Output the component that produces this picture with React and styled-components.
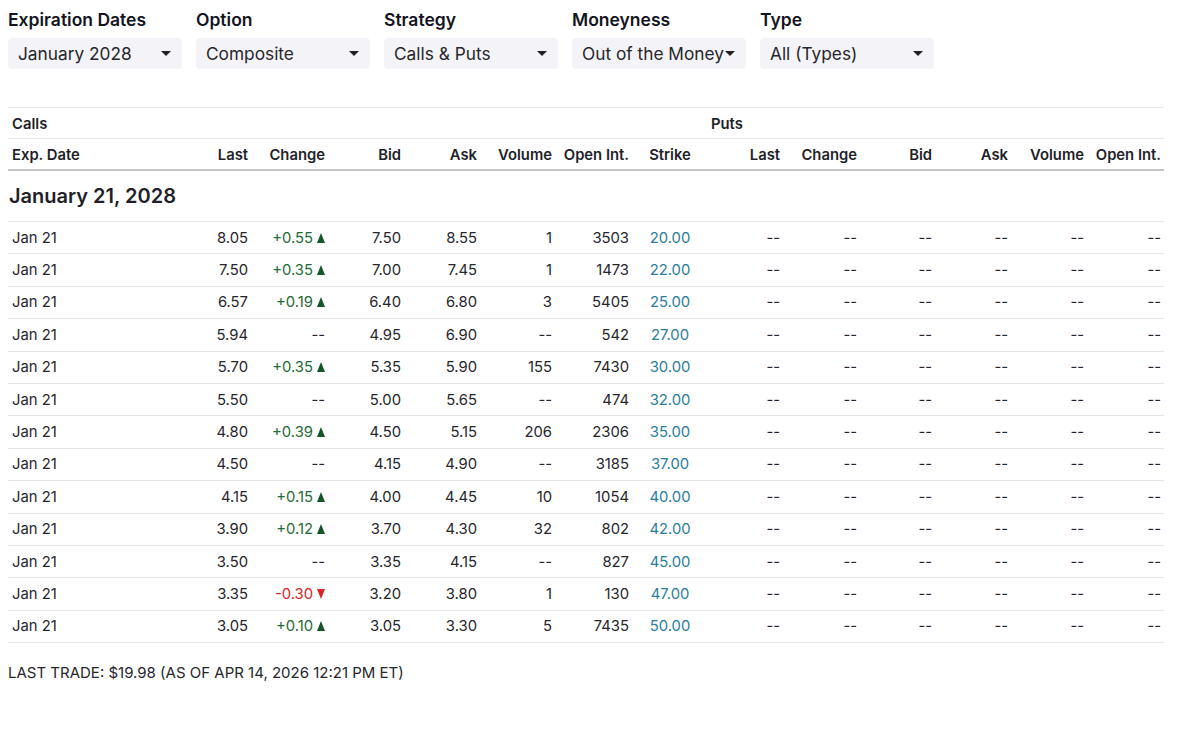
import React from "react"
import styled, { createGlobalStyle } from "styled-components"

const GlobalStyle = createGlobalStyle`
  body {
    margin: 0;
    background: #fff;
    font-family: Inter, "Liberation Sans", sans-serif;
    color: #1f1f24;
  }
`

const filters = [
  { label: "Expiration Dates", value: "January 2028" },
  { label: "Option", value: "Composite" },
  { label: "Strategy", value: "Calls & Puts" },
  { label: "Moneyness", value: "Out of the Money" },
  { label: "Type", value: "All (Types)" },
]

const rows = [
  ["8.05", "+0.55", "7.50", "8.55", "1", "3503", "20.00"],
  ["7.50", "+0.35", "7.00", "7.45", "1", "1473", "22.00"],
  ["6.57", "+0.19", "6.40", "6.80", "3", "5405", "25.00"],
  ["5.94", "--", "4.95", "6.90", "--", "542", "27.00"],
  ["5.70", "+0.35", "5.35", "5.90", "155", "7430", "30.00"],
  ["5.50", "--", "5.00", "5.65", "--", "474", "32.00"],
  ["4.80", "+0.39", "4.50", "5.15", "206", "2306", "35.00"],
  ["4.50", "--", "4.15", "4.90", "--", "3185", "37.00"],
  ["4.15", "+0.15", "4.00", "4.45", "10", "1054", "40.00"],
  ["3.90", "+0.12", "3.70", "4.30", "32", "802", "42.00"],
  ["3.50", "--", "3.35", "4.15", "--", "827", "45.00"],
  ["3.35", "-0.30", "3.20", "3.80", "1", "130", "47.00"],
  ["3.05", "+0.10", "3.05", "3.30", "5", "7435", "50.00"],
]

const sideCols = ["Last", "Change", "Bid", "Ask", "Volume", "Open Int."]

const Caret = () => (
  <svg width="10" height="5" viewBox="0 0 10 5">
    <polygon points="0,0 10,0 5,5" fill="#1f1f24" />
  </svg>
)

const Arrow = ({ up }) => (
  <svg width="8" height="10" viewBox="0 0 8 10" style={{ marginLeft: 4 }}>
    {up ? (
      <polygon points="4,0 8,10 0,10" fill="#14562a" />
    ) : (
      <polygon points="0,0 8,0 4,10" fill="#d7262b" />
    )}
  </svg>
)

const ChangeValue = ({ value }) => {
  if (value === "--") return value
  const up = value.startsWith("+")
  return (
    <ChangeText $up={up}>
      {value}
      <Arrow up={up} />
    </ChangeText>
  )
}

export default function App() {
  return (
    <Page>
      <GlobalStyle />
      <Filters>
        {filters.map((f) => (
          <Filter key={f.label}>
            <FilterLabel>{f.label}</FilterLabel>
            <Select>
              <span>{f.value}</span>
              <Caret />
            </Select>
          </Filter>
        ))}
      </Filters>

      <Table>
        <Row $height={30}>
          <SideTitle $col="1 / 8">Calls</SideTitle>
          <SideTitle $col="9 / 15">Puts</SideTitle>
        </Row>
        <HeadRow>
          <HeadCell $align="left">Exp. Date</HeadCell>
          {sideCols.map((c) => (
            <HeadCell key={"c" + c}>{c}</HeadCell>
          ))}
          <HeadCell $align="center">Strike</HeadCell>
          {sideCols.map((c) => (
            <HeadCell key={"p" + c}>{c}</HeadCell>
          ))}
        </HeadRow>
        <GroupTitle>January 21, 2028</GroupTitle>
        {rows.map((r, i) => (
          <DataRow key={i}>
            <Cell $align="left">Jan 21</Cell>
            <Cell>{r[0]}</Cell>
            <Cell>
              <ChangeValue value={r[1]} />
            </Cell>
            <Cell>{r[2]}</Cell>
            <Cell>{r[3]}</Cell>
            <Cell>{r[4]}</Cell>
            <Cell>{r[5]}</Cell>
            <Strike>{r[6]}</Strike>
            {sideCols.map((c) => (
              <Cell key={c}>--</Cell>
            ))}
          </DataRow>
        ))}
      </Table>

      <Footer>LAST TRADE: $19.98 (AS OF APR 14, 2026 12:21 PM ET)</Footer>
    </Page>
  )
}

const Page = styled.div`
  padding: 8px;
  width: 1156px;
`

const Filters = styled.div`
  display: flex;
  gap: 14px;
`

const Filter = styled.div`
  display: flex;
  flex-direction: column;
  gap: 6px;
  width: 174px;
`

const FilterLabel = styled.label`
  font-size: 17.5px;
  font-weight: 600;
  line-height: 24px;
  color: #14141f;
`

const Select = styled.div`
  display: flex;
  align-items: center;
  justify-content: space-between;

  height: 31px;
  padding: 0 11px 0 10px;
  box-sizing: border-box;

  background-color: #f4f4f8;
  border-radius: 4px;

  font-size: 17.3px;
  color: #26262c;
  white-space: nowrap;

  span {
    overflow: hidden;
  }
`

const Table = styled.div`
  margin-top: 38px;
  border-top: 1px solid #e6e6e6;
`

const columns = "167px 76px 77px 76px 76px 75px 77px 75px 76px 77px 75px 76px 76px 77px"

const Row = styled.div`
  display: grid;
  grid-template-columns: ${columns};
  align-items: center;
  height: ${(props) => props.$height}px;
  border-bottom: 1px solid #e6e6e6;
`

const HeadRow = styled(Row).attrs({ $height: 30 })`
  border-bottom: 2px solid #c6c6c8;
`

const DataRow = styled(Row).attrs({ $height: 31.4 })`
  font-size: 14.8px;
  color: #26262c;
`

const SideTitle = styled.div`
  grid-column: ${(props) => props.$col};
  padding: 1px 3px 0 4px;
  font-size: 14.8px;
  font-weight: 600;
  color: #1f1f2a;
`

const Cell = styled.div`
  padding: 0 3px 0 4px;
  text-align: ${(props) => props.$align || "right"};
  white-space: nowrap;
`

const HeadCell = styled(Cell)`
  padding-top: 1px;
  font-size: 14.8px;
  font-weight: 600;
  color: #1f1f2a;
`

const Strike = styled(Cell).attrs({ $align: "center" })`
  color: #2b7d9c;
`

const ChangeText = styled.span`
  display: inline-flex;
  align-items: center;
  color: ${(props) => (props.$up ? "#1f6b34" : "#d7262b")};
`

const GroupTitle = styled.h3`
  margin: 0;
  height: 50px;
  display: flex;
  align-items: center;
  padding-left: 1px;
  font-size: 20px;
  font-weight: 600;
  color: #1f1f2a;
  border-bottom: 1px solid #e6e6e6;
`

const Footer = styled.p`
  margin: 20px 0 0;
  font-size: 15px;
  color: #26262c;
`
